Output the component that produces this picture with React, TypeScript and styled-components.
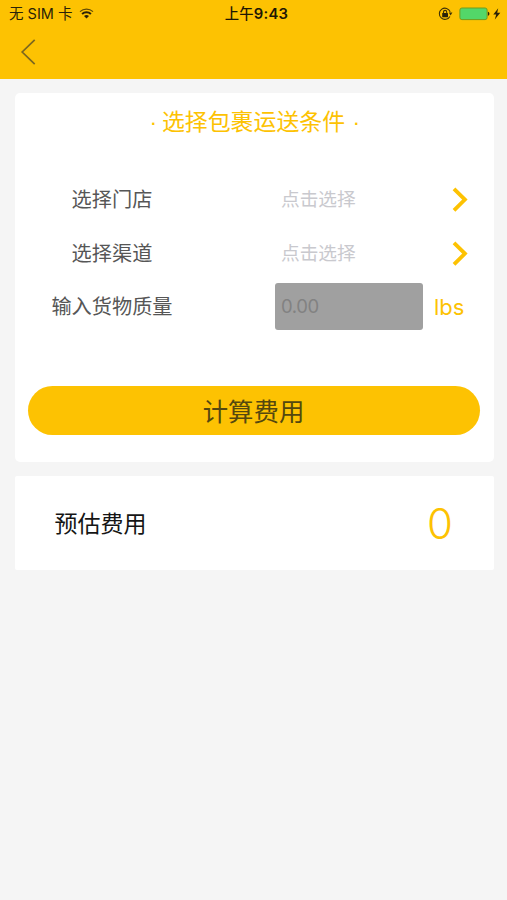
import React from "react";
import styled, { createGlobalStyle } from "styled-components";

const YELLOW = "#fdc202";

const GlobalStyle = createGlobalStyle`
  body {
    margin: 0;
    background: #f5f5f5;
    font-family: Inter, "Noto Sans CJK SC", sans-serif;
  }
  * { box-sizing: border-box; }
`;

const Screen = styled.main`
  display: flex;
  flex-direction: column;
  width: 507px;
  height: 900px;
  background: #f5f5f5;
  overflow: hidden;
`;

const Header = styled.header`
  height: 79px;
  flex: none;
  background: ${YELLOW};
`;

const StatusBar = styled.div`
  display: grid;
  grid-template-columns: 1fr auto 1fr;
  align-items: center;
  height: 27px;
  padding: 0 5px 0 9px;
  color: #2a2208;
`;

const Carrier = styled.div`
  display: flex;
  align-items: center;
  gap: 7px;
  font-size: 14.5px;
  line-height: 20px;
  white-space: nowrap;
`;

const Clock = styled.div`
  margin-left: 2px;
  font-size: 14.8px;
  line-height: 20px;
  font-weight: 600;
  letter-spacing: 0.2px;
  color: #1d1705;
`;

const DayPeriod = styled.span`
  font-size: 14.3px;
  font-weight: 500;
`;

const Indicators = styled.div`
  display: flex;
  align-items: center;
  justify-content: flex-end;
  gap: 6px;
`;

const NavBar = styled.nav`
  display: flex;
  align-items: center;
  height: 50px;
  padding-left: 20px;
`;

const IconButton = styled.button`
  display: flex;
  padding: 0;
  border: 0;
  background: none;
`;

const Card = styled.section<{ $radius: number }>`
  margin: 0 13px 0 14.5px;
  border-radius: ${(p) => p.$radius}px;
  background: #fff;
`;

const FormCard = styled(Card)`
  height: 369px;
  margin-top: 14px;
  padding: 9px 14px 0 13.5px;
`;

const Title = styled.h1`
  display: flex;
  justify-content: center;
  gap: 7.5px;
  margin: 0;
  height: 40px;
  padding-right: 1px;
  font-size: 22.9px;
  font-weight: 400;
  line-height: 40px;
  white-space: nowrap;
  color: ${YELLOW};
`;

const Dot = styled.span`
  font-family: "Liberation Sans", sans-serif;
  width: 5px;
  text-align: center;
`;

const Fields = styled.div`
  display: flex;
  flex-direction: column;
  margin-top: 30px;
`;

const Field = styled.div`
  display: grid;
  grid-template-columns: 168px 79px 148px 1fr;
  height: 53.7px;
  align-items: center;
`;

const Label = styled.label`
  padding-top: 2.4px;
  font-size: 20.2px;
  line-height: 30px;
  text-align: center;
  color: #565656;
`;

const Picker = styled.div`
  grid-column: 3;
  padding: 3px 0 0 6px;
  font-size: 18.7px;
  line-height: 28px;
  color: #c9c9ce;
`;

const Arrow = styled.div`
  display: flex;
  padding-left: 28px;
`;

const WeightInput = styled.input`
  grid-column: 3;
  width: 148px;
  height: 47px;
  padding: 0 6px;
  border: 0;
  border-radius: 3px;
  background: #a0a0a0;
  font-family: Inter, sans-serif;
  font-size: 18.5px;
  letter-spacing: -0.4px;
  &::placeholder { color: #828282; opacity: 1; }
`;

const Unit = styled.span`
  padding: 1px 0 0 11px;
  font-size: 22px;
  line-height: 30px;
  color: ${YELLOW};
`;

const Submit = styled.button`
  display: block;
  width: 100%;
  height: 48.5px;
  margin-top: 53px;
  padding: 0 1px 0 0;
  border: 0;
  border-radius: 25px;
  background: ${YELLOW};
  color: #54480f;
  font-family: "Noto Sans CJK SC", sans-serif;
  font-size: 25.4px;
  line-height: 46px;
`;

const ResultCard = styled(Card)`
  display: flex;
  align-items: center;
  justify-content: space-between;
  height: 94px;
  margin-top: 14px;
  padding: 1px 41px 0 40px;
`;

const ResultLabel = styled.span`
  font-size: 23px;
  line-height: 34px;
  color: #151515;
`;

const ResultValue = styled.output`
  font-size: 42px;
  font-weight: 360;
  line-height: 50px;
  color: ${YELLOW};
`;

const WifiIcon = () => (
  <svg width="15" height="11" viewBox="0 0 15 11" fill="none" stroke="#2a2208">
    <path d="M1 3.6A9.7 9.7 0 0 1 14 3.6" strokeWidth="1.2" opacity=".75" />
    <path d="M3.1 6A6.4 6.4 0 0 1 11.9 6" strokeWidth="2" />
    <path d="M5 8.1A3.7 3.7 0 0 1 10 8.1L7.5 10.6Z" fill="#2a2208" stroke="none" />
  </svg>
);

const RotationLockIcon = () => (
  <svg width="15" height="14" viewBox="0 0 15 14" fill="none" stroke="#3c3008">
    <path d="M11.9 9.4A5.6 5.6 0 1 1 12.2 4.8" strokeWidth="1.1" />
    <path d="M10.8 5.4H14.4L12.6 8.4Z" fill="#3c3008" stroke="none" />
    <rect x="4.2" y="6" width="5.8" height="4.2" rx=".5" fill="#2a2208" stroke="none" />
    <path d="M5.5 6.3V5a1.6 1.6 0 0 1 3.2 0v1.3" strokeWidth="1.1" />
  </svg>
);

const BatteryIcon = () => (
  <svg width="43" height="14" viewBox="0 0 43 14">
    <rect x=".9" y="1" width="27.2" height="11.6" rx="2" fill="#53d769" stroke="#6d9d20" />
    <path d="M28.9 4.8v4c2-.2 2-3.8 0-4Z" fill="#2a2208" />
    <path d="M39.2 1.2L34.3 7.6H37.2L35.8 12.4L41.3 5.8H38.2Z" fill="#2a2208" />
  </svg>
);

const BackIcon = () => (
  <svg width="17" height="28" viewBox="0 0 17 28" fill="none" stroke="#7c671f" strokeWidth="1.7">
    <path d="M14.7 1.8L2.2 14L14.7 26.2" />
  </svg>
);

const ChevronIcon = () => (
  <svg width="18" height="26" viewBox="0 0 18 26" fill="none" stroke={YELLOW} strokeWidth="3.8">
    <path d="M3 2.8L13.9 13.6L3 24.4" />
  </svg>
);

const pickers = ["选择门店", "选择渠道"];

export default function App() {
  return (
    <Screen>
      <GlobalStyle />
      <Header>
        <StatusBar>
          <Carrier>
            无 SIM 卡
            <WifiIcon />
          </Carrier>
          <Clock>
            <DayPeriod>上午</DayPeriod>9:43
          </Clock>
          <Indicators>
            <RotationLockIcon />
            <BatteryIcon />
          </Indicators>
        </StatusBar>
        <NavBar>
          <IconButton aria-label="返回">
            <BackIcon />
          </IconButton>
        </NavBar>
      </Header>
      <FormCard $radius={5}>
        <Title>
          <Dot>·</Dot>
          选择包裹运送条件
          <Dot>·</Dot>
        </Title>
        <Fields>
          {pickers.map((label) => (
            <Field key={label}>
              <Label>{label}</Label>
              <Picker>点击选择</Picker>
              <Arrow>
                <ChevronIcon />
              </Arrow>
            </Field>
          ))}
          <Field>
            <Label htmlFor="weight">输入货物质量</Label>
            <WeightInput id="weight" placeholder="0.00" />
            <Unit>lbs</Unit>
          </Field>
        </Fields>
        <Submit>计算费用</Submit>
      </FormCard>
      <ResultCard $radius={2}>
        <ResultLabel>预估费用</ResultLabel>
        <ResultValue>0</ResultValue>
      </ResultCard>
    </Screen>
  );
}
